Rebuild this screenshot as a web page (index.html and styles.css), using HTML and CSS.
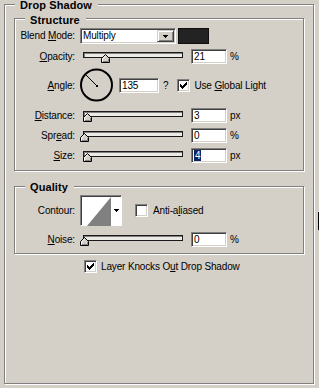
FILE: index.html
```html
<!DOCTYPE html>
<html>
<head>
<meta charset="utf-8">
<link rel="stylesheet" href="styles.css">
</head>
<body>
<div class="page">
  <section class="group outer">
    <div class="legend">Drop Shadow</div>

    <section class="group inner structure">
      <div class="legend">Structure</div>
      <div class="rows">
        <div class="row blend">
          <span class="lbl">Blend <u>M</u>ode:</span>
          <div class="select">
            <span class="val">Multiply</span>
            <span class="drop"><svg width="5" height="3" viewBox="0 0 5 3"><path d="M0 0h5v1h-5zM1 1h3v1h-3zM2 2h1v1h-1z" fill="#000"/></svg></span>
          </div>
          <div class="swatch"></div>
        </div>

        <div class="row">
          <span class="lbl"><u>O</u>pacity:</span>
          <div class="slider"><div class="track"></div><svg class="thumb" style="left:18px" width="9" height="9" viewBox="0 0 9 9"><polygon points="0.5,4.5 4.5,0.5 8.5,4.5 8.5,8.5 0.5,8.5" fill="#d4d0c8" stroke="#000"/><polyline points="1.5,7.5 1.5,4.9 4.5,1.9" fill="none" stroke="#fff"/><polyline points="7.5,5 7.5,7.5 2,7.5" fill="none" stroke="#808080"/></svg></div>
          <div class="num">21</div>
          <span class="unit">%</span>
        </div>

        <div class="row angle">
          <span class="lbl"><u>A</u>ngle:</span>
          <svg class="dial" width="33" height="34" viewBox="0 0 33 34"><circle cx="16.5" cy="17" r="15.5" fill="none" stroke="#000" stroke-width="2"/><line x1="17" y1="18" x2="6" y2="7" stroke="#000"/><rect x="16" y="17" width="2" height="2" fill="#000"/></svg>
          <div class="num wide">135</div>
          <span class="q">?</span>
          <span class="chk"><svg width="7" height="7" viewBox="0 0 7 7"><path d="M6 0h1v1h-1zM5 1h2v1h-2zM0 2h1v1h-1zM4 2h3v1h-3zM0 3h2v1h-2zM3 3h3v1h-3zM0 4h5v1h-5zM1 5h3v1h-3zM2 6h1v1h-1z" fill="#000"/></svg></span>
          <span class="chk-text">Use <u>G</u>lobal Light</span>
        </div>

        <div class="row">
          <span class="lbl"><u>D</u>istance:</span>
          <div class="slider"><div class="track"></div><svg class="thumb" style="left:0px" width="9" height="9" viewBox="0 0 9 9"><polygon points="0.5,4.5 4.5,0.5 8.5,4.5 8.5,8.5 0.5,8.5" fill="#d4d0c8" stroke="#000"/><polyline points="1.5,7.5 1.5,4.9 4.5,1.9" fill="none" stroke="#fff"/><polyline points="7.5,5 7.5,7.5 2,7.5" fill="none" stroke="#808080"/></svg></div>
          <div class="num">3</div>
          <span class="unit">px</span>
        </div>

        <div class="row">
          <span class="lbl">Spr<u>e</u>ad:</span>
          <div class="slider"><div class="track"></div><svg class="thumb" style="left:-3px" width="9" height="9" viewBox="0 0 9 9"><polygon points="0.5,4.5 4.5,0.5 8.5,4.5 8.5,8.5 0.5,8.5" fill="#d4d0c8" stroke="#000"/><polyline points="1.5,7.5 1.5,4.9 4.5,1.9" fill="none" stroke="#fff"/><polyline points="7.5,5 7.5,7.5 2,7.5" fill="none" stroke="#808080"/></svg></div>
          <div class="num">0</div>
          <span class="unit">%</span>
        </div>

        <div class="row">
          <span class="lbl"><u>S</u>ize:</span>
          <div class="slider"><div class="track"></div><svg class="thumb" style="left:0px" width="9" height="9" viewBox="0 0 9 9"><polygon points="0.5,4.5 4.5,0.5 8.5,4.5 8.5,8.5 0.5,8.5" fill="#d4d0c8" stroke="#000"/><polyline points="1.5,7.5 1.5,4.9 4.5,1.9" fill="none" stroke="#fff"/><polyline points="7.5,5 7.5,7.5 2,7.5" fill="none" stroke="#808080"/></svg></div>
          <div class="num"><span class="sel">4</span></div>
          <span class="unit">px</span>
        </div>
      </div>
    </section>

    <section class="group inner quality">
      <div class="legend">Quality</div>
      <div class="rows">
        <div class="row contour">
          <span class="lbl">Contour:</span>
          <div class="contour-box"><svg width="40" height="29" viewBox="0 0 40 29"><polygon points="5,29 29,0 29,29" fill="#808080"/><path d="M32 12h5v1h-5zM33 13h3v1h-3zM34 14h1v1h-1z" fill="#000"/></svg></div>
          <span class="chk empty"></span>
          <span class="chk-text">Anti-a<u>l</u>iased</span>
        </div>
        <div class="row">
          <span class="lbl"><u>N</u>oise:</span>
          <div class="slider"><div class="track"></div><svg class="thumb" style="left:-3px" width="9" height="9" viewBox="0 0 9 9"><polygon points="0.5,4.5 4.5,0.5 8.5,4.5 8.5,8.5 0.5,8.5" fill="#d4d0c8" stroke="#000"/><polyline points="1.5,7.5 1.5,4.9 4.5,1.9" fill="none" stroke="#fff"/><polyline points="7.5,5 7.5,7.5 2,7.5" fill="none" stroke="#808080"/></svg></div>
          <div class="num">0</div>
          <span class="unit">%</span>
        </div>
      </div>
    </section>

    <div class="knock">
      <span class="chk"><svg width="7" height="7" viewBox="0 0 7 7"><path d="M6 0h1v1h-1zM5 1h2v1h-2zM0 2h1v1h-1zM4 2h3v1h-3zM0 3h2v1h-2zM3 3h3v1h-3zM0 4h5v1h-5zM1 5h3v1h-3zM2 6h1v1h-1z" fill="#000"/></svg></span>
      <span class="chk-text">Layer Knocks O<u>u</u>t Drop Shadow</span>
    </div>
  </section>
  <div class="edge-mark"></div>
</div>
</body>
</html>
```

FILE: styles.css
```css
* { box-sizing: border-box; }
html, body { margin: 0; padding: 0; }
body {
  width: 319px;
  height: 388px;
  overflow: hidden;
  background: #d4d0c8;
  color: #000;
  font-family: "Liberation Sans", Arial, sans-serif;
  font-size: 10px;
  line-height: 12px;
  letter-spacing: -0.15px;
}
u { text-underline-offset: 1px; }

.page { display: flex; align-items: flex-start; }

.group {
  border: 1px solid #808080;
  box-shadow: inset 1px 1px #fff, 1px 1px #fff;
}
.outer {
  margin: 4px 0 0 4px;
  width: 310px;
  height: 380px;
  flex: none;
}
.legend {
  width: max-content;
  margin: -6px 0 0 10px;
  padding: 0 6px 0 5px;
  background: #d4d0c8;
  font-weight: bold;
  font-size: 11px;
  line-height: 12px;
  letter-spacing: 0.1px;
}
.structure .legend { margin-top: -5px; }
.inner {
  width: 290px;
  margin-left: 9px;
}
.structure { margin-top: 7px; }
.quality { margin-top: 15px; }

.rows {
  display: flex;
  flex-direction: column;
  gap: 5px;
  padding: 2px 0 7px;
}
.quality .rows { gap: 6px; padding: 2px 0 6px; }

.row {
  display: flex;
  align-items: center;
  height: 15px;
}
.row.blend { height: 16px; }
.row.angle { height: 35px; margin-top: -1px; }
.row.contour { height: 31px; }

.lbl {
  width: 60px;
  margin-right: 5px;
  text-align: right;
  flex: none;
  white-space: nowrap;
}

/* sunken fields */
.select, .num, .chk, .contour-box {
  background: #fff;
  border: 1px solid;
  border-color: #808080 #fff #fff #808080;
  box-shadow: inset 1px 1px #404040, inset -1px -1px #d4d0c8;
  flex: none;
}
.select {
  width: 96px;
  height: 16px;
  display: flex;
  align-items: center;
  padding: 1px 1px 1px 2px;
}
.select .val { flex: 1; }
.drop {
  width: 17px;
  height: 12px;
  background: #d4d0c8;
  border: 1px solid;
  border-color: #d4d0c8 #404040 #404040 #d4d0c8;
  box-shadow: inset 1px 1px #fff, inset -1px -1px #808080;
  display: flex;
  align-items: center;
  justify-content: center;
}
.drop svg { display: block; }
.swatch {
  width: 31px;
  height: 16px;
  margin-left: 2px;
  background: #232323;
  border: 1px solid #0e0e0e;
  flex: none;
}

.slider {
  position: relative;
  width: 100px;
  height: 15px;
  margin: 0 8px 0 3px;
  flex: none;
}
.track {
  margin-top: 3px;
  height: 6px;
  border: 1px solid #1a1a1a;
  background: #eceae4;
  box-shadow: inset 1px 1px #808080;
}
.thumb {
  position: absolute;
  top: 5px;
  display: block;
}

.num {
  width: 36px;
  height: 15px;
  padding-left: 2px;
  display: flex;
  align-items: center;
}
.num.wide { width: 40px; margin-left: 6px; }
.sel { background: #0a246a; color: #fff; padding: 0 1px; line-height: 11px; }
.unit { margin-left: 3px; }

.dial { align-self: flex-start; display: block; flex: none; }
.q { margin-left: 4px; }

.chk {
  width: 13px;
  height: 13px;
  display: flex;
  align-items: center;
  justify-content: center;
  margin-left: 9px;
}
.chk svg { display: block; }
.chk-text { margin-left: 4px; white-space: nowrap; }

.contour-box {
  width: 42px;
  height: 31px;
  padding: 1px;
  box-shadow: inset 1px 1px #404040;
}
.contour-box svg { display: block; }
.contour .chk { margin-left: 13px; }
.contour .chk-text { margin-left: 5px; }

.knock {
  display: flex;
  align-items: center;
  height: 13px;
  margin: 6px 0 0 79px;
}
.knock .chk { margin-left: 0; }

.edge-mark {
  width: 1px;
  height: 18px;
  margin: 212px 0 0 4px;
  background: #000;
  flex: none;
}
```
